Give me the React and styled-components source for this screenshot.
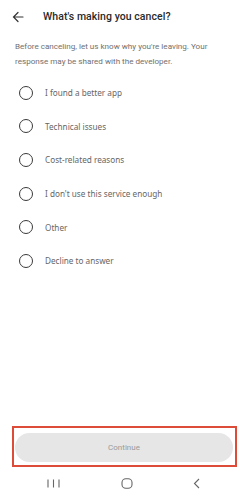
import React from "react";
import styled, { createGlobalStyle } from "styled-components";

const Global = createGlobalStyle`
  html, body { margin: 0; padding: 0; background: #fff; }
  body { font-family: Roboto, "Noto Sans", sans-serif; }
  #root { width: 246px; height: 500px; }
  *, *::before, *::after { box-sizing: border-box; }
`;

const Screen = styled.div`
  width: 246px;
  height: 500px;
  display: flex;
  flex-direction: column;
  background: #fff;
  overflow: hidden;
`;

const Header = styled.div`
  height: 33px;
  display: flex;
  align-items: center;
  padding-left: 12px;
  gap: 19px;
`;

const BackButton = styled.div`
  width: 12px;
  height: 12px;
  display: flex;
  align-items: center;
  justify-content: center;
  color: #333;
`;

const Title = styled.h1`
  margin: 0;
  font-family: Roboto, sans-serif;
  font-size: 10.5px;
  font-weight: 500;
  color: #2a2a2a;
  letter-spacing: 0.05px;
`;

const Description = styled.p`
  margin: 6px 0 0;
  padding: 0 15px;
  font-family: Roboto, sans-serif;
  font-size: 8.1px;
  line-height: 15px;
  color: #707070;
`;

const Options = styled.div`
  display: flex;
  flex-direction: column;
  margin-top: 7px;
`;

const Option = styled.label`
  height: 33.6px;
  display: flex;
  align-items: center;
  padding-left: 19px;
  gap: 12px;
`;

const Radio = styled.span`
  width: 14px;
  height: 14px;
  border: 1.7px solid #3a3a3a;
  border-radius: 50%;
  flex-shrink: 0;
`;

const Label = styled.span`
  font-family: "Noto Sans", sans-serif;
  font-size: 8.2px;
  color: #666;
`;

const Spacer = styled.div`
  flex: 1;
`;

const Highlight = styled.div`
  margin: 0 9px 0 12px;
  height: 41px;
  border: 2px solid #dd4b39;
  padding: 5px 2px 3px 1px;
  display: flex;
`;

const ContinueButton = styled.button`
  flex: 1;
  border: none;
  border-radius: 15px;
  background: #e6e6e6;
  color: #9a9a9a;
  font-family: Roboto, sans-serif;
  font-size: 8px;
  padding: 0;
`;

const NavBar = styled.div`
  height: 33px;
  display: flex;
  align-items: center;
  justify-content: space-between;
  padding: 0 46px 0 47px;
  color: #666;
`;

const NavIcon = styled.svg`
  display: block;
`;

const options = [
  "I found a better app",
  "Technical issues",
  "Cost-related reasons",
  "I don't use this service enough",
  "Other",
  "Decline to answer",
];

export default function App() {
  return (
    <Screen>
      <Global />
      <Header>
        <BackButton>
          <svg width="12" height="12" viewBox="0 0 12 12" fill="none" stroke="#333" strokeWidth="1.2" strokeLinecap="round">
            <path d="M11 6H1.5M6 1.5L1.5 6L6 10.5" />
          </svg>
        </BackButton>
        <Title>What's making you cancel?</Title>
      </Header>
      <Description>
        Before canceling, let us know why you're leaving. Your response may be shared with the developer.
      </Description>
      <Options>
        {options.map((o) => (
          <Option key={o}>
            <Radio />
            <Label>{o}</Label>
          </Option>
        ))}
      </Options>
      <Spacer />
      <Highlight>
        <ContinueButton>Continue</ContinueButton>
      </Highlight>
      <NavBar>
        <NavIcon width="13" height="9" viewBox="0 0 13 9" stroke="#666" strokeWidth="1.1">
          <path d="M1 0.5V8.5M6.5 0.5V8.5M12 0.5V8.5" />
        </NavIcon>
        <NavIcon width="12" height="11" viewBox="0 0 12 11" fill="none" stroke="#666" strokeWidth="1.1">
          <rect x="1" y="0.8" width="10" height="9.4" rx="3.8" />
        </NavIcon>
        <NavIcon width="7" height="11" viewBox="0 0 7 11" fill="none" stroke="#666" strokeWidth="1.1">
          <path d="M6 1L1.5 5.5L6 10" />
        </NavIcon>
      </NavBar>
    </Screen>
  );
}
